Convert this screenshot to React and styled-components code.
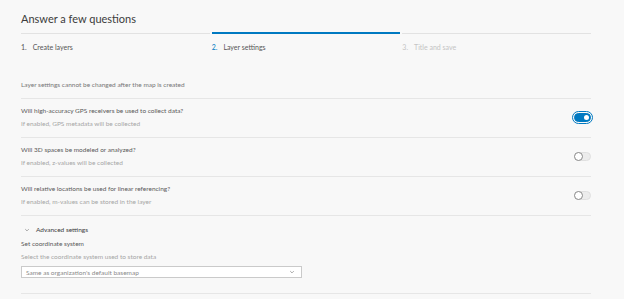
import styled, { createGlobalStyle } from "styled-components";

const GlobalStyle = createGlobalStyle`
  html, body {
    margin: 0;
    padding: 0;
    background: #f8f8f8;
  }
  body {
    font-family: "Lato", "Open Sans", sans-serif;
    color: #555;
  }
`;

const Page = styled.div`
  width: 570px;
  padding: 12px 0 0 21px;
`;

const Title = styled.h1`
  margin: 0;
  font-size: 11px;
  line-height: 14px;
  font-weight: 400;
  color: #3c3c3c;
`;

const Steps = styled.div`
  display: grid;
  grid-template-columns: repeat(3, 1fr);
  column-gap: 2px;
  margin-top: 7px;
`;

const Step = styled.div`
  border-top: ${(p) => (p.$active ? "2px solid #0079c1" : "1px solid #e2e2e2")};
  margin-top: ${(p) => (p.$active ? "-1px" : "0")};
  padding-top: 8px;
  font-size: 7px;
  line-height: 10px;
  color: ${(p) => (p.$muted ? "#c4c4c4" : "#555")};
  display: flex;
  gap: 6px;
`;

const StepNum = styled.span`
  color: ${(p) => (p.$active ? "#0079c1" : "inherit")};
`;

const Note = styled.p`
  margin: 28px 0 8px;
  font-size: 6.5px;
  line-height: 10px;
  color: #777;
`;

const Row = styled.div`
  display: flex;
  align-items: center;
  justify-content: space-between;
  border-top: 1px solid #e6e6e6;
  padding: 7px 0 8px;
`;

const Question = styled.div`
  display: flex;
  flex-direction: column;
  gap: 3px;
`;

const Label = styled.div`
  font-size: 6.5px;
  line-height: 10px;
  color: #5a5a5a;
`;

const Hint = styled.div`
  font-size: 6.5px;
  line-height: 10px;
  color: #a6a6a6;
`;

const Toggle = styled.span`
  position: relative;
  display: inline-block;
  width: 17px;
  height: 9px;
  box-sizing: border-box;
  border-radius: 5px;
  background: ${(p) => (p.$on ? "#0079c1" : "#ececec")};
  border: 1px solid ${(p) => (p.$on ? "#0079c1" : "#e0e0e0")};
  outline: ${(p) => (p.$on ? "1px solid #0079c1" : "none")};
  outline-offset: 1px;

  &::after {
    content: "";
    position: absolute;
    top: ${(p) => (p.$on ? "1px" : "-1px")};
    left: ${(p) => (p.$on ? "9px" : "-1px")};
    width: ${(p) => (p.$on ? "5px" : "9px")};
    height: ${(p) => (p.$on ? "5px" : "9px")};
    box-sizing: border-box;
    border-radius: 50%;
    background: #fff;
    border: ${(p) => (p.$on ? "none" : "1.5px solid #8a8a8a")};
  }
`;

const Advanced = styled.div`
  border-top: 1px solid #e6e6e6;
  border-bottom: 1px solid #e6e6e6;
  padding: 9px 0 15px;
`;

const Disclosure = styled.div`
  display: flex;
  align-items: center;
  gap: 6px;
  padding-left: 3px;
  font-size: 6.5px;
  line-height: 10px;
  color: #3c3c3c;
  margin-bottom: 4px;
`;

const FieldLabel = styled.div`
  font-size: 6.5px;
  line-height: 10px;
  color: #5a5a5a;
  margin-bottom: 3px;
`;

const FieldHint = styled(Hint)`
  margin-bottom: 4px;
`;

const Select = styled.div`
  width: 281px;
  height: 12px;
  box-sizing: border-box;
  border: 1px solid #cacaca;
  background: #fff;
  display: flex;
  align-items: center;
  justify-content: space-between;
  padding: 0 6px 0 4px;
  font-size: 6.5px;
  color: #8a8a8a;
`;

const Chevron = ({ size = 6, color = "#777" }) => (
  <svg width={size} height={size} viewBox="0 0 10 10">
    <path d="M2 3.5 L5 6.5 L8 3.5" fill="none" stroke={color} strokeWidth="1.2" />
  </svg>
);

const questions = [
  {
    label: "Will high-accuracy GPS receivers be used to collect data?",
    hint: "If enabled, GPS metadata will be collected",
    on: true,
  },
  {
    label: "Will 3D spaces be modeled or analyzed?",
    hint: "If enabled, z-values will be collected",
    on: false,
  },
  {
    label: "Will relative locations be used for linear referencing?",
    hint: "If enabled, m-values can be stored in the layer",
    on: false,
  },
];

export default function App() {
  return (
    <>
      <GlobalStyle />
      <Page>
        <Title>Answer a few questions</Title>
        <Steps>
          <Step>
            <StepNum>1.</StepNum> Create layers
          </Step>
          <Step $active>
            <StepNum $active>2.</StepNum> Layer settings
          </Step>
          <Step $muted>
            <StepNum>3.</StepNum> Title and save
          </Step>
        </Steps>

        <Note>Layer settings cannot be changed after the map is created</Note>

        {questions.map((q) => (
          <Row key={q.label}>
            <Question>
              <Label>{q.label}</Label>
              <Hint>{q.hint}</Hint>
            </Question>
            <Toggle $on={q.on} />
          </Row>
        ))}

        <Advanced>
          <Disclosure>
            <Chevron size={6} color="#888" />
            Advanced settings
          </Disclosure>
          <FieldLabel>Set coordinate system</FieldLabel>
          <FieldHint>Select the coordinate system used to store data</FieldHint>
          <Select>
            Same as organization's default basemap
            <Chevron size={6} color="#888" />
          </Select>
        </Advanced>
      </Page>
    </>
  );
}
